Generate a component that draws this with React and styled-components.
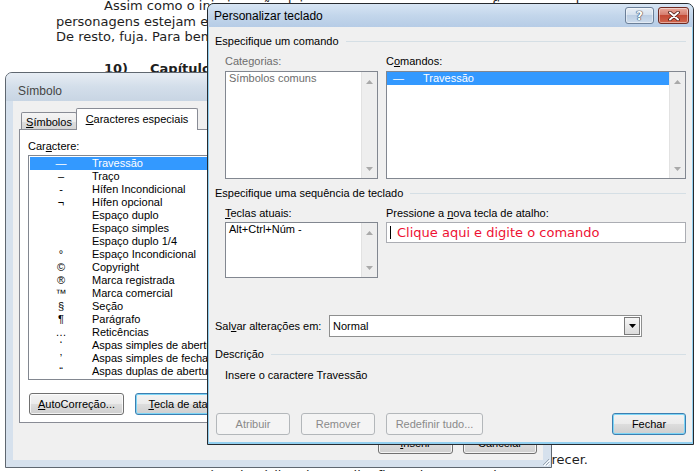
import React from "react";
import styled, { createGlobalStyle } from "styled-components";

const ui = `"Liberation Sans", Arial, sans-serif`;

const GlobalStyle = createGlobalStyle`
  html, body {
    margin: 0;
    padding: 0;
    background: #fff;
  }
  body {
    overflow: hidden;
  }
`;

const Desktop = styled.div`
  position: relative;
  width: 697px;
  height: 471px;
  overflow: hidden;
  background: #fff;
`;

/* ---------- document behind the dialogs ---------- */

const Doc = styled.div`
  margin-top: -2px;
  padding-left: 56px;
  font-family: "DejaVu Sans", Verdana, sans-serif;
  font-size: 13px;
  line-height: 15.5px;
  color: #1e1e1e;
  white-space: nowrap;
`;

const DocLine = styled.div`
  padding-left: ${p => p.$indent || 0}px;
`;

const Heading = styled.div`
  margin-top: 16.5px;
  padding-left: 48px;
  font-weight: bold;
  span + span {
    margin-left: 22px;
  }
`;

const EndLine = styled.div`
  margin-top: 375.5px;
  width: 532px;
  text-align: right;
`;

/* ---------- window chrome ---------- */

const Window = styled.div`
  position: absolute;
  left: ${p => p.$x}px;
  top: ${p => p.$y}px;
  width: ${p => p.$w}px;
  height: ${p => p.$h}px;
  box-sizing: border-box;
  display: flex;
  flex-direction: column;
  border: 1px solid ${p => (p.$active ? "#262a2f" : "#5f6770")};
  border-radius: 7px 7px 0 0;
  background: ${p => (p.$active ? "#93d0f0" : "#d6e1ed")};
  font-family: ${ui};
  font-size: 11px;
  color: #000;
  overflow: hidden;
`;

const TitleBar = styled.div`
  flex: none;
  height: ${p => p.$h}px;
  box-sizing: border-box;
  display: flex;
  align-items: center;
  padding: ${p => p.$padTop || 0}px 4px 0 ${p => p.$padLeft}px;
  background: ${p =>
    p.$active
      ? "linear-gradient(#d7e5f4 0%, #c3d6eb 50%, #b6cce6 100%)"
      : "linear-gradient(#e7edf4 0%, #d3deea 50%, #c8d5e3 100%)"};
`;

const TitleText = styled.div`
  flex: 1;
  font-size: 12px;
  line-height: 14px;
  color: ${p => (p.$active ? "#000" : "#454545")};
`;

const CaptionButtons = styled.div`
  display: flex;
  gap: 4px;
`;

const CaptionBtn = styled.div`
  width: ${p => p.$w}px;
  height: 17px;
  box-sizing: border-box;
  display: flex;
  align-items: center;
  justify-content: center;
  border: 1px solid ${p => (p.$close ? "#6e2a22" : "#6b7f98")};
  border-radius: 3px;
  background: ${p =>
    p.$close
      ? "linear-gradient(#e9aa9c 0%, #d67d6e 45%, #c44a35 50%, #d0644c 100%)"
      : "linear-gradient(#e9eff6 0%, #d5e1ee 45%, #bccee3 50%, #cddced 100%)"};
  box-shadow: inset 0 0 0 1px rgba(255, 255, 255, 0.45);
  color: #fff;
  font: bold 12px "DejaVu Sans", sans-serif;
  text-shadow: 0 0 1px #2c3e55, 0 0 1px #2c3e55, 0 0 1px #2c3e55;
`;

const Grip = styled.svg`
  position: absolute;
  right: 1px;
  bottom: 1px;
`;

/* ---------- shared controls ---------- */

const Button = styled.div`
  width: ${p => p.$w}px;
  height: 22px;
  box-sizing: border-box;
  display: flex;
  align-items: center;
  justify-content: center;
  border: 1px solid
    ${p => (p.$disabled ? "#b3b7ba" : p.$default ? "#3c7fb1" : "#707070")};
  border-radius: 3px;
  color: ${p => (p.$disabled ? "#8a8a8a" : "#000")};
  background: ${p =>
    p.$disabled
      ? "#f4f4f4"
      : "linear-gradient(#f3f3f3 0%, #ebebeb 49%, #dddddd 50%, #cfcfcf 100%)"};
  box-shadow: ${p =>
    p.$disabled
      ? "none"
      : p.$default
      ? "inset 0 0 0 1px #7dd5f6"
      : "inset 0 0 0 1px rgba(255,255,255,0.75)"};
`;

const Label = styled.div`
  line-height: 14px;
  color: ${p => (p.$disabled ? "#6d6d6d" : "#000")};
`;

const Arrow = ({ up, color = "#a9a9a9" }) => (
  <svg width="7" height="4" viewBox="0 0 7 4">
    <path d={up ? "M0 4 L3.5 0 L7 4 Z" : "M0 0 L7 0 L3.5 4 Z"} fill={color} />
  </svg>
);

/* ---------- Símbolo dialog ---------- */

const SymClient = styled.div`
  flex: 1;
  margin: 0 8px 7px 7px;
  padding: 7px 6px 6px;
  background: #f0f0f0;
  display: flex;
  flex-direction: column;
`;

const TabStrip = styled.div`
  height: 22px;
  display: flex;
  align-items: flex-end;
  padding-left: 2px;
`;

const Tab = styled.div`
  box-sizing: border-box;
  width: ${p => p.$w}px;
  height: ${p => (p.$active ? 22 : 18)}px;
  display: flex;
  align-items: center;
  justify-content: center;
  border: 1px solid #898c95;
  border-bottom: none;
  border-radius: 2px 2px 0 0;
  margin-left: ${p => (p.$active ? -1 : 0)}px;
  padding-bottom: ${p => (p.$active ? 2 : 0)}px;
  background: ${p =>
    p.$active ? "#fff" : "linear-gradient(#f5f5f5 0%, #ececec 50%, #dedede 51%, #d4d4d4 100%)"};
  position: ${p => (p.$active ? "relative" : "static")};
  z-index: ${p => (p.$active ? 1 : "auto")};
`;

const TabPanel = styled.div`
  margin-top: -1px;
  height: 294px;
  box-sizing: border-box;
  border: 1px solid #898c95;
  background: #fff;
  padding: 9px 8px 7px;
  display: flex;
  flex-direction: column;
`;

const CharList = styled.div`
  margin-top: 2px;
  height: 225px;
  box-sizing: border-box;
  border: 1px solid #828790;
  padding: 1px;
  background: #fff;
`;

const CharRow = styled.div`
  display: flex;
  height: 13px;
  line-height: 13px;
  white-space: nowrap;
  background: ${p => (p.$selected ? "#3399ff" : "transparent")};
  color: ${p => (p.$selected ? "#fff" : "#000")};
`;

const SymCell = styled.span`
  flex: none;
  width: ${p => p.$w}px;
  padding-left: ${p => p.$pad || 0}px;
  text-align: ${p => (p.$left ? "left" : "center")};
`;

const Row = styled.div`
  display: flex;
  gap: ${p => p.$gap}px;
  margin-top: ${p => p.$top || 0}px;
  padding-left: ${p => p.$left || 0}px;
  justify-content: ${p => (p.$end ? "flex-end" : "flex-start")};
  align-items: ${p => p.$align || "flex-start"};
`;

const Fill = styled.div`
  flex: 1;
`;

/* ---------- Personalizar teclado dialog ---------- */

const KClient = styled.div`
  flex: 1;
  margin: 0 1px 2px 1px;
  padding: 0 6px;
  background: #f0f0f0;
  display: flex;
  flex-direction: column;
`;

const GroupHeader = styled.div`
  margin-top: ${p => p.$top}px;
  display: flex;
  align-items: center;
  gap: 7px;
  line-height: 14px;
  &::after {
    content: "";
    flex: 1;
    height: 1px;
    background: #d5dfe5;
  }
`;

const Field = styled.div`
  width: ${p => p.$w}px;
  display: flex;
  flex-direction: column;
  gap: ${p => p.$gap}px;
`;

const ListBox = styled.div`
  height: ${p => p.$h}px;
  box-sizing: border-box;
  border: 1px solid #828790;
  background: #fff;
  display: flex;
`;

const ListBody = styled.div`
  flex: 1;
  min-width: 0;
`;

const ListItem = styled.div`
  display: flex;
  height: 13px;
  line-height: 13px;
  padding-left: ${p => p.$pad}px;
  background: ${p => (p.$selected ? "#3399ff" : "transparent")};
  color: ${p => (p.$selected ? "#fff" : p.$disabled ? "#6d6d6d" : "#000")};
`;

const ScrollBar = styled.div`
  flex: none;
  width: 16px;
  display: flex;
  flex-direction: column;
  justify-content: space-between;
  align-items: center;
  padding: 8px 0 7px;
  box-sizing: border-box;
  background: #eeeeee;
  border-left: 1px solid #e2e2e2;
`;

const ShortcutInput = styled.div`
  height: 21px;
  box-sizing: border-box;
  border: 1px solid #abadb3;
  background: #fff;
  display: flex;
  align-items: center;
  padding-left: 3px;
`;

const Caret = styled.div`
  width: 1px;
  height: 13px;
  background: #000;
  margin-right: 6px;
`;

const Hint = styled.span`
  font-family: "DejaVu Sans", Verdana, sans-serif;
  font-size: 13px;
  color: #ee1133;
  white-space: nowrap;
`;

const SaveLabel = styled.div`
  width: 114px;
  line-height: 22px;
`;

const Select = styled.div`
  width: 313px;
  height: 22px;
  box-sizing: border-box;
  border: 1px solid #8e8f8f;
  background: #fff;
  display: flex;
  align-items: center;
  padding: 0 1px 0 3px;
`;

const SelectValue = styled.div`
  flex: 1;
`;

const DropButton = styled.div`
  width: 16px;
  height: 18px;
  box-sizing: border-box;
  border: 1px solid #7a7a7a;
  background: linear-gradient(#f6f6f6, #dcdcdc);
  display: flex;
  align-items: center;
  justify-content: center;
`;

const DescText = styled.div`
  margin-top: 7px;
  padding-left: 10px;
  line-height: 14px;
`;

const chars = [
  ["—", "Travessão"],
  ["–", "Traço"],
  ["-", "Hífen Incondicional"],
  ["¬", "Hífen opcional"],
  ["", "Espaço duplo"],
  ["", "Espaço simples"],
  ["", "Espaço duplo 1/4"],
  ["°", "Espaço Incondicional"],
  ["©", "Copyright"],
  ["®", "Marca registrada"],
  ["™", "Marca comercial"],
  ["§", "Seção"],
  ["¶", "Parágrafo"],
  ["…", "Reticências"],
  ["‘", "Aspas simples de abertura"],
  ["’", "Aspas simples de fechamento"],
  ["“", "Aspas duplas de abertura"],
];

const SymbolDialog = () => (
  <Window $x={5} $y={72} $w={547} $h={396}>
    <TitleBar $h={28} $padLeft={12} $padTop={7}>
      <TitleText>Símbolo</TitleText>
    </TitleBar>
    <SymClient>
      <TabStrip>
        <Tab $w={56}>
          <span><u>S</u>ímbolos</span>
        </Tab>
        <Tab $w={122} $active>
          <span><u>C</u>aracteres especiais</span>
        </Tab>
      </TabStrip>
      <TabPanel>
        <Label>Car<u>a</u>ctere:</Label>
        <CharList>
          {chars.map(([sym, name], i) => (
            <CharRow key={name} $selected={i === 0}>
              <SymCell $w={62}>{sym}</SymCell>
              <span>{name}</span>
            </CharRow>
          ))}
        </CharList>
        <Row $gap={11} $top={13} $left={1}>
          <Button $w={95}><span><u>A</u>utoCorreção...</span></Button>
          <Button $w={110} $default><span><u>T</u>ecla de atalho...</span></Button>
        </Row>
      </TabPanel>
      <Row $gap={10} $top={9} $end>
        <Button $w={75}><span><u>I</u>nserir</span></Button>
        <Button $w={74}>Cancelar</Button>
      </Row>
    </SymClient>
    <Grip width="9" height="9" viewBox="0 0 9 9">
      <path d="M8 2 L2 8 M8 5 L5 8" stroke="#9aa6b3" strokeWidth="1" />
      <path d="M9 3 L3 9 M9 6 L6 9" stroke="#ffffff" strokeWidth="1" />
    </Grip>
  </Window>
);

const KeyboardDialog = () => (
  <Window $x={207} $y={3} $w={487} $h={442} $active>
    <TitleBar $h={23} $padLeft={6} $active>
      <TitleText $active>Personalizar teclado</TitleText>
      <CaptionButtons>
        <CaptionBtn $w={29}>?</CaptionBtn>
        <CaptionBtn $w={31} $close>
          <svg width="12" height="10" viewBox="0 0 12 10">
            <path d="M2 1.5 L10 8.5 M10 1.5 L2 8.5" stroke="#4a1a14" strokeWidth="3.6" strokeLinecap="round" />
            <path d="M2 1.5 L10 8.5 M10 1.5 L2 8.5" stroke="#ffffff" strokeWidth="2" strokeLinecap="round" />
          </svg>
        </CaptionBtn>
      </CaptionButtons>
    </TitleBar>
    <KClient>
      <GroupHeader $top={7}>Especifique um comando</GroupHeader>
      <Row $gap={8} $top={6} $left={10}>
        <Field $w={153} $gap={3}>
          <Label $disabled>Categorias:</Label>
          <ListBox $h={108}>
            <ListBody>
              <ListItem $pad={3} $disabled>Símbolos comuns</ListItem>
            </ListBody>
            <ScrollBar>
              <Arrow up />
              <Arrow />
            </ScrollBar>
          </ListBox>
        </Field>
        <Field $w={300} $gap={3}>
          <Label>C<u>o</u>mandos:</Label>
          <ListBox $h={108}>
            <ListBody>
              <ListItem $pad={6} $selected>
                <SymCell $w={30} $left>—</SymCell>
                <span>Travessão</span>
              </ListItem>
            </ListBody>
            <ScrollBar>
              <Arrow up />
              <Arrow />
            </ScrollBar>
          </ListBox>
        </Field>
      </Row>
      <GroupHeader $top={7}>Especifique uma sequência de teclado</GroupHeader>
      <Row $gap={8} $top={6} $left={10}>
        <Field $w={153} $gap={2}>
          <Label><u>T</u>eclas atuais:</Label>
          <ListBox $h={56}>
            <ListBody>
              <ListItem $pad={3}>Alt+Ctrl+Núm -</ListItem>
            </ListBody>
            <ScrollBar>
              <Arrow up />
              <Arrow />
            </ScrollBar>
          </ListBox>
        </Field>
        <Field $w={300} $gap={2}>
          <Label>Pressione a <u>n</u>ova tecla de atalho:</Label>
          <ShortcutInput>
            <Caret />
            <Hint>Clique aqui e digite o comando</Hint>
          </ShortcutInput>
        </Field>
      </Row>
      <Row $gap={0} $top={37}>
        <SaveLabel>Sal<u>v</u>ar alterações em:</SaveLabel>
        <Select>
          <SelectValue>Normal</SelectValue>
          <DropButton>
            <Arrow color="#000" />
          </DropButton>
        </Select>
      </Row>
      <GroupHeader $top={10}>Descrição</GroupHeader>
      <DescText>Insere o caractere Travessão</DescText>
      <Row $gap={11} $top={31} $left={1} $align="center">
        <Button $w={74} $disabled>Atribuir</Button>
        <Button $w={74} $disabled>Remover</Button>
        <Button $w={97} $disabled>Redefinir tudo...</Button>
        <Fill />
        <Button $w={74} $default>Fechar</Button>
      </Row>
    </KClient>
  </Window>
);

export default function App() {
  return (
    <>
      <GlobalStyle />
      <Desktop>
        <Doc>
          <DocLine $indent={48}>Assim como o inimigo, não deixe que os seus personagens fiquem parados.</DocLine>
          <DocLine>personagens estejam em todos os lugares ao mesmo tempo da história.</DocLine>
          <DocLine>De resto, fuja. Para bem longe de tudo o que for clichê ou previsível.</DocLine>
          <Heading>
            <span>10)</span>
            <span>Capítulos</span>
          </Heading>
          <EndLine>Quando terminar, feche a janela e o atalho vai aparecer.</EndLine>
          <DocLine $indent={48}>1. Esse recurso é muito útil, pois o atalho fica salvo no Word.</DocLine>
        </Doc>
        <SymbolDialog />
        <KeyboardDialog />
      </Desktop>
    </>
  );
}
